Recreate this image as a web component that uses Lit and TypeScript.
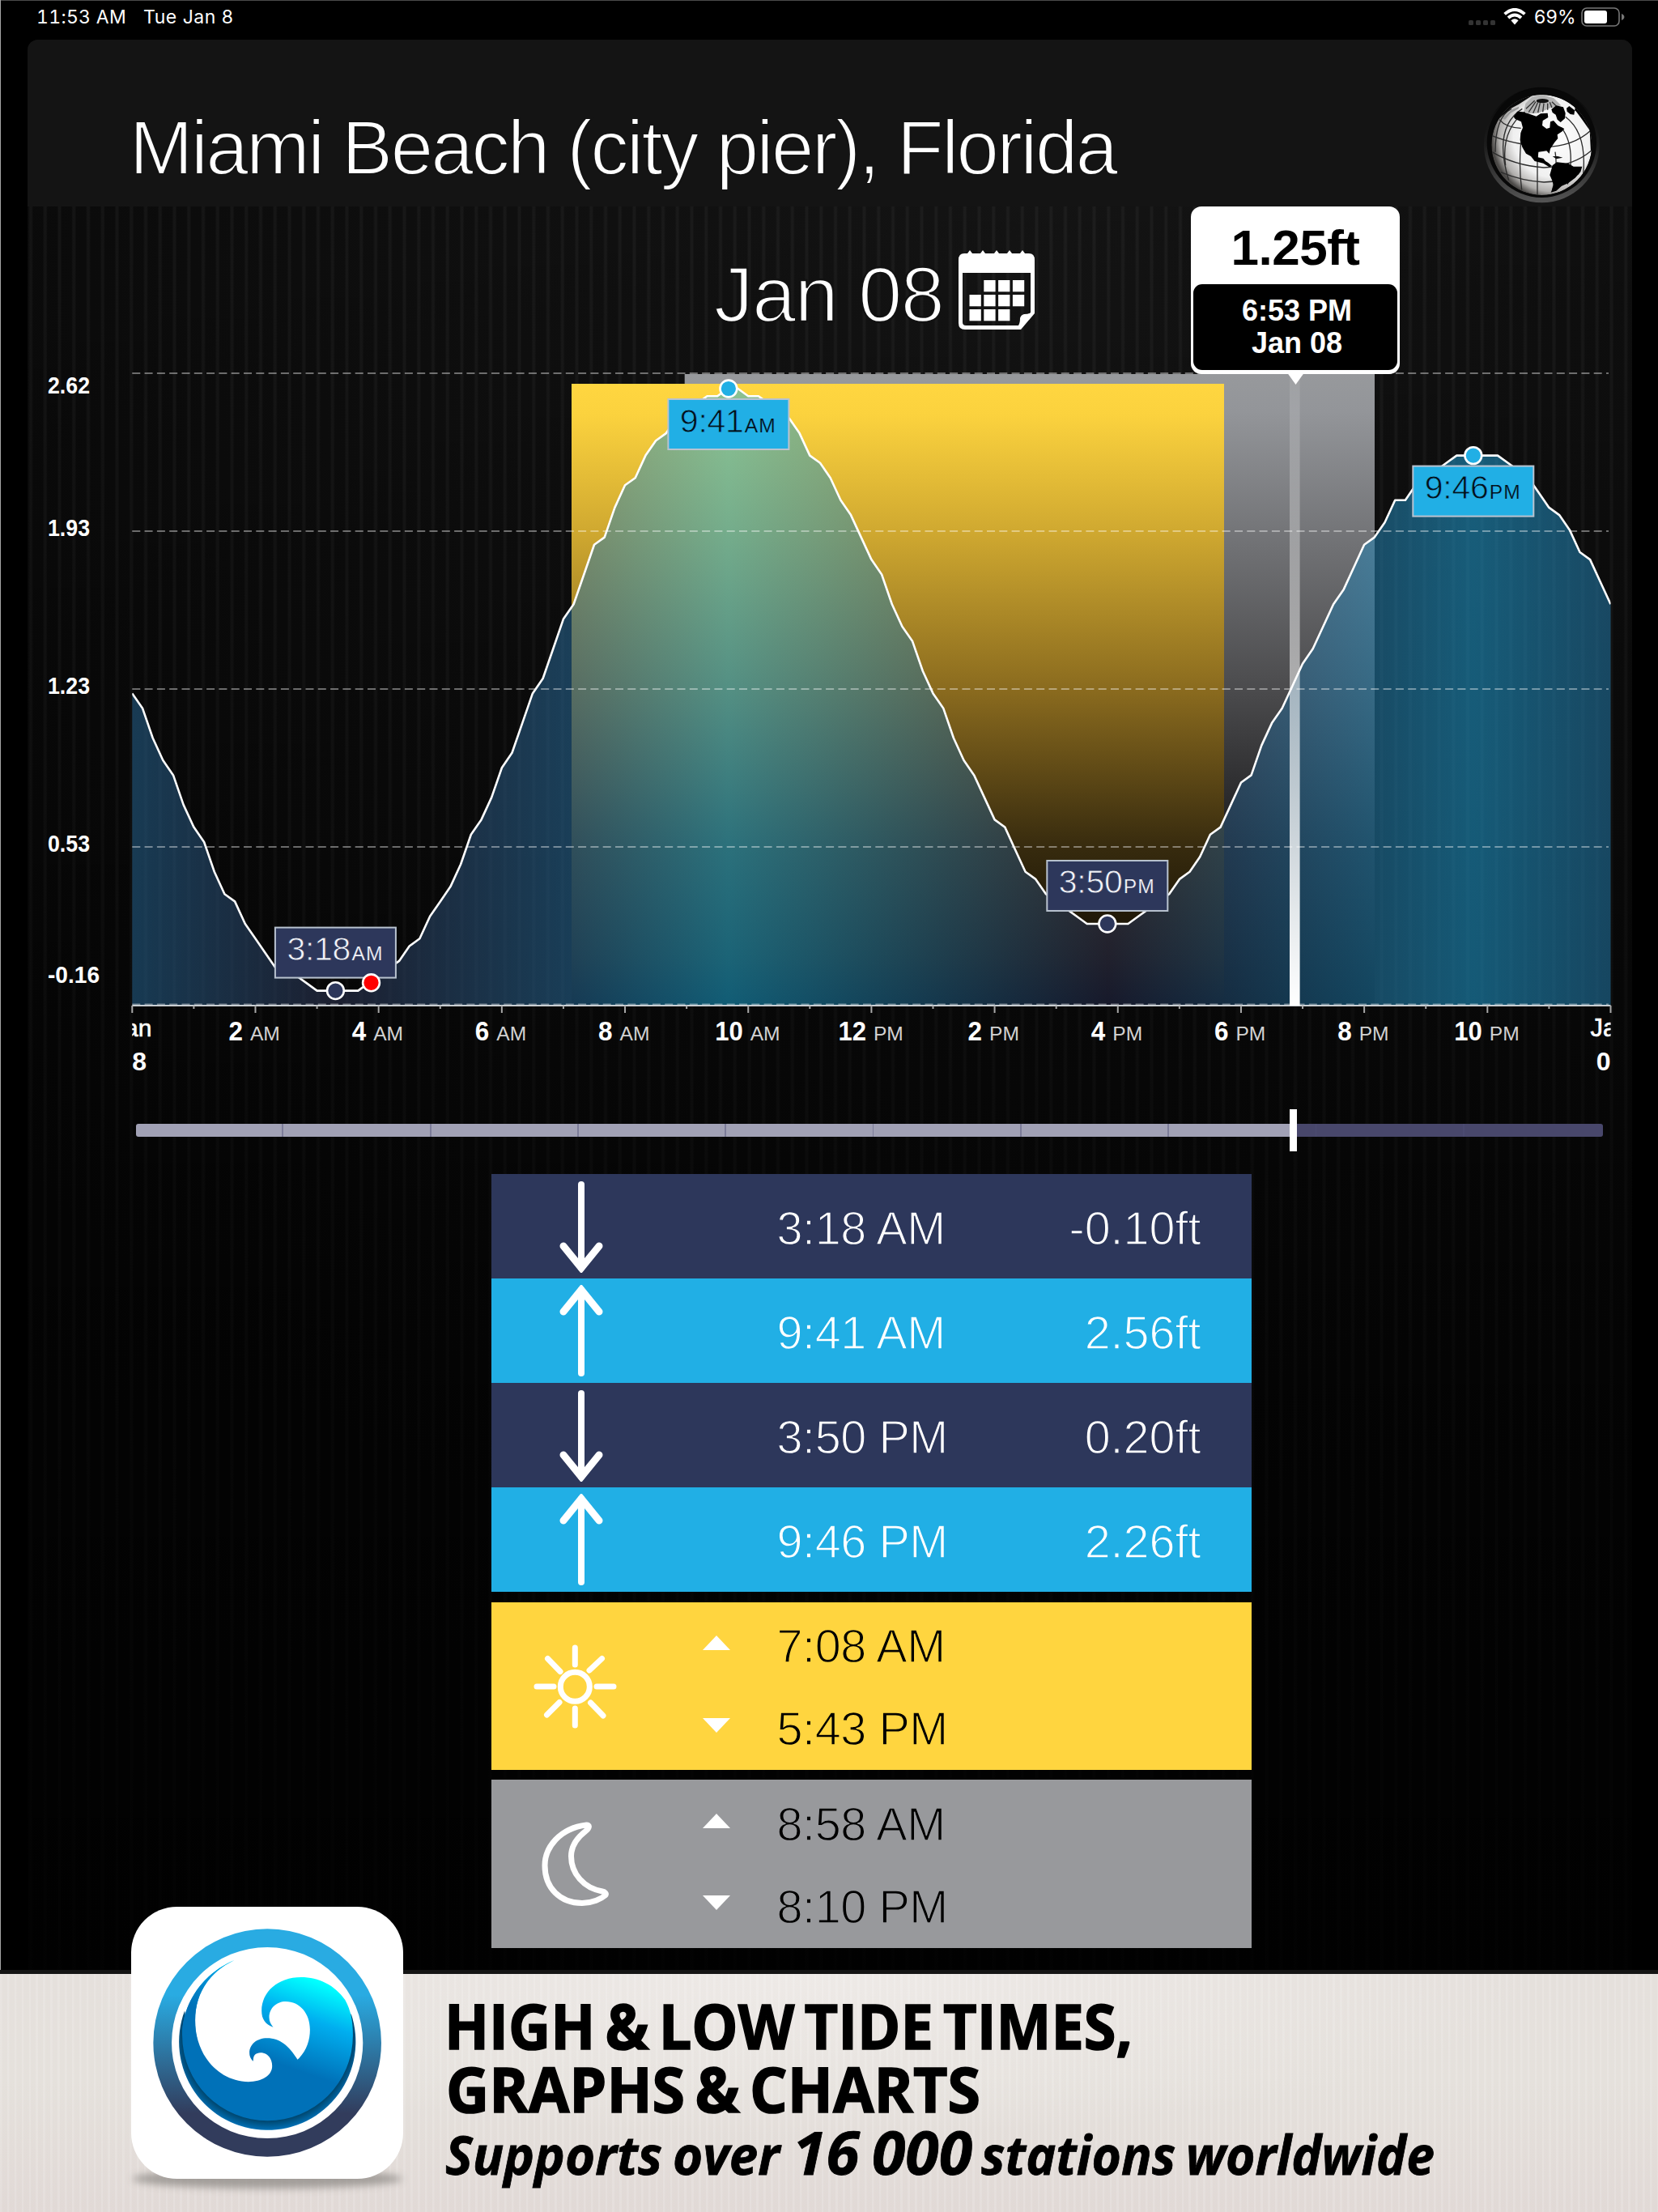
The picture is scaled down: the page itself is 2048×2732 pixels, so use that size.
import { LitElement, html, svg, css } from 'lit';
import { customElement, property } from 'lit/decorators.js';

type tideType = 'high' | 'low';

interface Marker {
  hour: number;
  cm: number;
  time: string;
  suffix: string;
  type: tideType;
}

// water level in cm, one sample every 10 minutes
const LEVELS = [
  37, 35, 31, 28, 26, 22, 19, 17, 13, 10, 9, 6, 4, 2, 0, -1, -1, -2, -3, -3, -3, -3, -3, -2,
  -1, 0, 1, 3, 4, 7, 9, 11, 14, 18, 20, 23, 27, 29, 33, 37, 39, 43, 47, 49, 53, 57, 58, 62,
  65, 66, 69, 71, 72, 74, 75, 76, 77, 77, 78, 78, 77, 77, 76, 75, 74, 72, 69, 68, 66, 63, 61, 58,
  55, 53, 49, 46, 44, 40, 37, 35, 31, 28, 26, 23, 20, 19, 16, 13, 12, 10, 9, 8, 7, 6, 6, 6,
  6, 6, 7, 8, 9, 10, 12, 13, 15, 18, 19, 22, 25, 26, 30, 33, 35, 38, 41, 43, 46, 49, 51, 54,
  57, 58, 60, 63, 63, 65, 66, 67, 68, 69, 69, 69, 69, 69, 68, 67, 66, 64, 62, 61, 59, 56, 55, 52, 49,
];

const MARKERS: Marker[] = [
  { hour: 3.3, cm: -3, time: '3:18', suffix: 'AM', type: 'low' },
  { hour: 9.68, cm: 78, time: '9:41', suffix: 'AM', type: 'high' },
  { hour: 15.83, cm: 6, time: '3:50', suffix: 'PM', type: 'low' },
  { hour: 21.77, cm: 69, time: '9:46', suffix: 'PM', type: 'high' },
];

const LEFT = 163.3;
const RIGHT = 1989.5;
const BASE = 1241;
const HOUR = (RIGHT - LEFT) / 24;

const px = (hour: number) => LEFT + hour * HOUR;
const py = (cm: number) => 480 + (78 - cm) * 9.18;

@customElement('tide-chart')
export class TideChart extends LitElement {
  static styles = css`
    :host {
      display: block;
      height: 879px;
    }

    svg {
      display: block;
      width: 1982px;
      height: 879px;
      overflow: visible;
      font-family: "Liberation Sans", Arial, sans-serif;
    }

    .bold {
      font-weight: 700;
      fill: #fff;
    }

    .grid {
      stroke: #fff;
      stroke-opacity: 0.4;
      stroke-width: 2;
      stroke-dasharray: 10 5.3;
    }

    .tick {
      stroke: #a9a9a9;
      stroke-width: 2;
    }

    .curve {
      fill: none;
      stroke: #fff;
      stroke-width: 2.6;
      stroke-linejoin: round;
    }

    .suffix {
      font-size: 24.6px;
      fill: #d2d2d2;
    }

    .box {
      stroke: #b9c3d0;
      stroke-width: 2;
    }

    .low .box,
    .low circle {
      fill: #2d375b;
    }

    .high .box,
    .high circle {
      fill: #21afe5;
    }

    .low text {
      fill: #f2f3f8;
      stroke: #2d375b;
    }

    .high text {
      fill: #04121a;
      stroke: #21afe5;
    }

    .marker circle,
    .now {
      stroke: #fff;
      stroke-width: 2.6;
    }

    .marker text {
      stroke-width: 0.8;
    }

    .marker .unit {
      stroke-width: 0.2;
    }
  `;

  private _marker(m: Marker) {
    const x = px(m.hour);
    const y = py(m.cm);
    const top = m.type === 'low' ? y - 78 : y + 13;
    return svg`
      <g class="marker ${m.type}">
        <rect class="box" x=${x - 74.5} y=${top} width="149" height="62" />
        <text x=${x - 60} y=${top + 40.5} font-size="41" textLength="79">${m.time}</text>
        <text class="unit" x=${x + 20} y=${top + 40.5} font-size="24.6" textLength="38">${m.suffix}</text>
        <circle cx=${x} cy=${y} r="10.4" />
      </g>
    `;
  }

  private _hourLabel(hour: number) {
    const x = px(hour);
    const num = hour > 12 ? hour - 12 : hour;
    const start = num > 9 ? x - 41 : x - 33;
    return svg`
      <text class="bold" x=${start} y="1284.5" font-size="33.5" textLength=${num > 9 ? 34.5 : 17.5} lengthAdjust="spacingAndGlyphs">${num}</text>
      <text class="suffix" x=${start + (num > 9 ? 43.5 : 26.5)} y="1284.5">${hour < 12 ? 'AM' : 'PM'}</text>
    `;
  }

  render() {
    const line = LEVELS.map((cm, i) => `${px(i / 6).toFixed(1)},${py(cm).toFixed(1)}`).join(' L');
    const rows: [string, number, number, number][] = [
      ['2.62', 461, 486, 52],
      ['1.93', 656, 661.5, 52],
      ['1.23', 851, 856.5, 52],
      ['0.53', 1046, 1051.5, 52],
      ['-0.16', 1240.5, 1214, 64],
    ];
    const hours = Array.from({ length: 25 }, (_, i) => i);

    return html`
      <svg viewBox="34 461 1982 879">
        <defs>
          <linearGradient id="sun" x1="0" y1="0" x2="0" y2="1">
            <stop offset="0" stop-color="#ffd640" />
            <stop offset="0.05" stop-color="#fbd23e" />
            <stop offset="0.24" stop-color="#cfa830" />
            <stop offset="0.5" stop-color="#88691e" />
            <stop offset="0.75" stop-color="#362a0e" />
            <stop offset="0.92" stop-color="#161004" />
            <stop offset="1" stop-color="#000" />
          </linearGradient>
          <linearGradient id="moon" x1="0" y1="0" x2="0" y2="1">
            <stop offset="0" stop-color="#97999c" />
            <stop offset="0.06" stop-color="#939599" />
            <stop offset="0.5" stop-color="#4b4b4d" />
            <stop offset="0.75" stop-color="#1c1c1e" />
            <stop offset="1" stop-color="#000" />
          </linearGradient>
          <linearGradient id="water" gradientUnits="userSpaceOnUse" x1=${LEFT} y1="0" x2=${RIGHT} y2="0">
            <stop offset="0" stop-color="#276998" />
            <stop offset="0.1375" stop-color="#2f3656" />
            <stop offset="0.2975" stop-color="#296fa0" />
            <stop offset="0.403" stop-color="#21b1e0" />
            <stop offset="0.66" stop-color="#2b3052" />
            <stop offset="0.907" stop-color="#21a5dc" />
            <stop offset="1" stop-color="#2480b2" />
          </linearGradient>
          <linearGradient id="needle" x1="0" y1="0" x2="0" y2="1">
            <stop offset="0" stop-color="#fff" stop-opacity="0.08" />
            <stop offset="0.85" stop-color="#fff" stop-opacity="0.88" />
            <stop offset="1" stop-color="#fff" />
          </linearGradient>
          <clipPath id="plot">
            <rect x=${LEFT} y="440" width=${RIGHT - LEFT} height="900" />
          </clipPath>
        </defs>

        <line class="grid" x1=${LEFT} x2="1987" y1="461" y2="461" />
        <rect x="845.7" y="462" width="852.3" height="779" fill="url(#moon)" />
        <rect x="706" y="474" width="806" height="767" fill="url(#sun)" />
        <path d="M${LEFT},${BASE} L${line} L${RIGHT},${BASE} Z" fill="url(#water)" fill-opacity="0.52" />
        ${rows.slice(1).map(([, y]) => svg`<line class="grid" x1=${LEFT} x2="1987" y1=${y} y2=${y} />`)}
        <g clip-path="url(#plot)"><path class="curve" d="M${line}" /></g>
        <line x1=${LEFT} x2=${RIGHT} y1="1242" y2="1242" stroke="#c9ced2" stroke-width="2" />
        ${hours.map((h) => svg`<line class="tick" x1=${px(h)} x2=${px(h)} y1="1242" y2=${h % 2 ? 1246 : 1251} />`)}

        ${rows.map(([label, , y, w]) => svg`
          <text class="bold" x="59" y=${y} font-size="29" textLength=${w} lengthAdjust="spacingAndGlyphs">${label}</text>
        `)}
        ${hours.filter((h) => h % 2 === 0 && h > 0 && h < 24).map((h) => this._hourLabel(h))}
        <g clip-path="url(#plot)" text-anchor="middle" fill="#fff">
          <text x=${LEFT} y="1280" font-size="30" stroke="#fff" stroke-width="0.6">Jan</text>
          <text class="bold" x=${LEFT} y="1322" font-size="32">08</text>
          <text x=${RIGHT} y="1280" font-size="31" stroke="#fff" stroke-width="0.6">Jan</text>
          <text class="bold" x=${RIGHT} y="1322" font-size="32">09</text>
        </g>

        ${MARKERS.map((m) => this._marker(m))}
        <circle class="now" cx="458.5" cy="1213.8" r="10.4" fill="#f00" />
        <rect x="1593" y="462" width="12.6" height="780" fill="url(#needle)" />
        <path d="M1590.5 461 h20 l-10 14 z" fill="#fff" />
      </svg>
    `;
  }
}

@customElement('tide-row')
export class TideRow extends LitElement {
  static styles = css`
    :host {
      display: block;
      font-family: "Liberation Sans", Arial, sans-serif;
      font-size: 57.5px;
      letter-spacing: -0.4px;
    }

    .row {
      display: flex;
      height: 129.1px;
      box-sizing: border-box;
      padding: 0 62px 0 84px;
      align-items: center;
      color: #fff;
    }

    .low {
      background: #2d375b;
      -webkit-text-stroke: 1.4px #2d375b;
    }

    .high {
      background: #21afe5;
      -webkit-text-stroke: 1.4px #21afe5;
    }

    .time {
      flex: 1;
      margin-left: 215px;
      padding-top: 4px;
    }

    .value {
      padding-top: 4px;
      letter-spacing: 0;
    }

    .arrow {
      width: 54px;
      height: 114px;
      fill: none;
      stroke: #fff;
      stroke-linecap: round;
      stroke-width: 8;
    }

    .low .arrow {
      transform: rotate(180deg);
    }
  `;

  @property({ type: String })
  type: tideType = 'high';

  @property({ type: String })
  time = '';

  @property({ type: String })
  value = '';

  render() {
    return html`
      <div class="row ${this.type}">
        <svg class="arrow" viewBox="0 0 54 114">
          <path d="M27 6 V109" />
          <path d="M5 33 L27 6 L49 33" stroke-width="9" />
        </svg>
        <span class="time">${this.time}</span>
        <span class="value">${this.value}</span>
      </div>
    `;
  }
}

@customElement('rise-set')
export class RiseSet extends LitElement {
  static styles = css`
    :host {
      display: block;
      font-family: "Liberation Sans", Arial, sans-serif;
      font-size: 57.5px;
      letter-spacing: -0.4px;
    }

    .card {
      display: flex;
      height: 207.5px;
    }

    .sun {
      background: #ffd53f;
      color: #000;
      -webkit-text-stroke: 1.4px #ffd53f;
    }

    .moon {
      background: #98999c;
      color: #000;
      -webkit-text-stroke: 1.4px #98999c;
    }

    .icon {
      width: 206px;
      height: 207px;
      fill: none;
      stroke: #fff;
      stroke-width: 7;
      stroke-linecap: round;
      stroke-linejoin: round;
    }

    .times {
      display: flex;
      flex-direction: column;
      padding: 4px 0 0 55px;
    }

    .line {
      display: flex;
      align-items: center;
      gap: 58px;
      height: 103.2px;
    }

    .tri {
      width: 34px;
      height: 18px;
      fill: #fff;
      margin-top: -9px;
    }
  `;

  @property({ type: String })
  type: 'sun' | 'moon' = 'sun';

  @property({ type: String })
  rise = '';

  @property({ type: String })
  set = '';

  render() {
    return html`
      <div class="card ${this.type}">
        <svg class="icon" viewBox="0 0 206 207">
          ${this.type === 'sun'
            ? svg`
              <circle cx="103.3" cy="104.2" r="18" />
              <path d="M103.3 56 V77 M103.3 131 V152 M56 104 H77 M130 104 H151 M69.5 69.5 L85 85.5
                M136.5 69.5 L121 84 M68.5 139 L84 123.5 M138 140 L122.5 124" />
            `
            : svg`
              <path d="M117.5 56 C84 60 66 84 66 106 C66 134 85 152.5 112 152.5 C125 152.5 136 147 140.5 143
                C143 141 140 138.5 137 138 C114 134 98.5 116 98.5 94.5 C98.5 82 105.5 72 116.5 63.5 C121.5 59 121.5 56 117.5 56 Z" />
            `}
        </svg>
        <div class="times">
          <div class="line">
            <svg class="tri" viewBox="0 0 34 18"><path d="M0 18 L17 0 L34 18 Z" /></svg>
            <span>${this.rise}</span>
          </div>
          <div class="line">
            <svg class="tri" viewBox="0 0 34 18"><path d="M0 0 L17 18 L34 0 Z" /></svg>
            <span>${this.set}</span>
          </div>
        </div>
      </div>
    `;
  }
}

@customElement('app-root')
export class AppRoot extends LitElement {
  static styles = css`
    :host {
      display: flex;
      flex-direction: column;
      width: 2048px;
      height: 2732px;
      overflow: hidden;
      position: relative;
      background: #000;
      font-family: "Liberation Sans", Arial, sans-serif;
      color: #fff;
    }

    .status {
      display: flex;
      align-items: center;
      height: 49px;
      box-sizing: border-box;
      border-top: 1px solid #4a4a4a;
      padding: 0 46px 9px 45px;
      font-family: Inter, sans-serif;
      font-size: 23px;
      letter-spacing: 0.3px;
    }

    .clock {
      font-variant-numeric: tabular-nums;
    }

    .date {
      flex: 1;
      margin-left: 21px;
      letter-spacing: 0.5px;
    }

    .status svg {
      display: block;
    }

    .wifi {
      margin: 0 10px 0 9px;
    }

    .battery {
      margin-left: 6px;
      margin-right: -5px;
    }

    .screen {
      display: flex;
      flex-direction: column;
      flex: 1;
      margin: 0 32px 0 34px;
      border-radius: 13px 13px 0 0;
      background:
        linear-gradient(180deg, transparent 0, rgba(0, 0, 0, 0.3) 900px, rgba(0, 0, 0, 0.75) 2000px, rgba(0, 0, 0, 0.88) 2400px),
        repeating-linear-gradient(90deg, transparent 0 1px, rgba(255, 255, 255, 0.042) 3px 5px, transparent 7px 17.75px),
        radial-gradient(1700px 1700px at 1250px 250px, #151515, #080808);
    }

    .header {
      display: flex;
      justify-content: space-between;
      align-items: center;
      height: 206px;
      box-sizing: border-box;
      padding: 0 38px 0 126px;
      background: #141414;
      border-radius: 13px 13px 0 0;
    }

    .header h1 {
      margin: 61px 0 0;
      font-size: 94px;
      font-weight: 400;
      letter-spacing: -2.4px;
      line-height: 1;
      white-space: nowrap;
      -webkit-text-stroke: 2px #141414;
    }

    .globe {
      width: 147px;
      height: 147px;
      margin-top: 53px;
    }

    .day {
      display: flex;
      align-items: center;
      height: 206px;
      padding-left: 848px;
      font-size: 97px;
      letter-spacing: -1.3px;
      -webkit-text-stroke: 2.4px #121212;
    }

    .day span {
      padding-top: 12px;
    }

    .day svg {
      margin: 2px 0 0 18px;
    }

    .slider {
      display: flex;
      align-items: center;
      width: 1812px;
      height: 110px;
      box-sizing: border-box;
      padding-top: 2px;
      margin-left: 134px;
      position: relative;
    }

    .track {
      flex: 1;
      height: 16px;
      border-radius: 3px;
      background:
        repeating-linear-gradient(90deg, transparent 0 180.5px, rgba(80, 80, 120, 0.45) 180.5px 182.3px),
        linear-gradient(90deg, #a1a1b5 1429px, #48476b 1429px);
    }

    .handle {
      position: absolute;
      left: 1425px;
      top: 30px;
      width: 9px;
      height: 52px;
      background: #fff;
    }

    .table {
      display: flex;
      flex-direction: column;
      width: 939px;
      margin-left: 572.5px;
    }

    rise-set {
      margin-top: 12.2px;
    }

    .tooltip {
      position: absolute;
      left: 1471px;
      top: 255px;
      width: 258px;
      height: 207px;
      box-sizing: border-box;
      padding: 0 3px 5px;
      display: flex;
      flex-direction: column;
      border-radius: 13px;
      background: #fff;
      color: #000;
      font-weight: 700;
      text-align: center;
    }

    .height {
      height: 96px;
      line-height: 102px;
      font-size: 62px;
      letter-spacing: -0.5px;
    }

    .when {
      flex: 1;
      padding: 13px 0 0 4px;
      border-radius: 11px;
      background: #000;
      color: #fff;
      font-size: 36px;
      line-height: 40px;
    }

    .banner {
      position: absolute;
      left: 0;
      right: 0;
      bottom: 0;
      height: 299px;
      box-sizing: border-box;
      border-top: 5px solid #141414;
      display: flex;
      gap: 52px;
      padding-left: 162px;
      background:
        repeating-linear-gradient(90deg, rgba(255, 255, 255, 0.14) 0 2px, transparent 3px 8.9px),
        radial-gradient(900px 200px at 1000px 0, #eeeae7, transparent),
        linear-gradient(180deg, #e5e0dc, #e5e1dc 45%, #e1d9d6);
    }

    .appicon {
      width: 336px;
      height: 336px;
      margin-top: -83px;
      overflow: visible;
    }

    .tagline {
      width: 1300px;
      height: 294px;
      font-family: "Open Sans", sans-serif;
      font-weight: 700;
      word-spacing: -7px;
      fill: #000;
      stroke: #000;
      stroke-width: 1.6;
    }

    .tagline .sub {
      font-style: italic;
      word-spacing: -4px;
      stroke-width: 0.8;
    }

    .edge {
      position: absolute;
      left: 0;
      top: 0;
      width: 1px;
      height: 2433px;
      background: #a5a5a5;
    }
  `;

  private _globe() {
    return html`
      <svg class="globe" viewBox="92 312 441 441">
        <defs>
          <radialGradient id="ball" cx="0.62" cy="0.42" r="0.62">
            <stop offset="0" stop-color="#fff" />
            <stop offset="0.65" stop-color="#f0f0f0" />
            <stop offset="0.88" stop-color="#b0aeac" />
            <stop offset="1" stop-color="#4a4846" />
          </radialGradient>
          <linearGradient id="rim" x1="0" y1="0" x2="0" y2="1">
            <stop offset="0" stop-color="#070707" />
            <stop offset="0.5" stop-color="#1c1c1c" />
            <stop offset="1" stop-color="#555" />
          </linearGradient>
          <clipPath id="disc"><circle cx="312" cy="534" r="186" /></clipPath>
        </defs>
        <circle cx="312" cy="534" r="214" fill="url(#rim)" />
        <circle cx="312" cy="526" r="203" fill="#080808" />
        <g clip-path="url(#disc)">
          <circle cx="312" cy="534" r="186" fill="url(#ball)" />
          <g fill="none" stroke="#2c2c2c" stroke-width="4">
            <path d="M155 440 Q180 470 235 472 M128 500 Q200 530 320 542 Q430 540 494 480 M128 560 Q210 610 320 618
              Q430 612 496 555 M160 635 Q240 668 320 672 Q400 670 450 640" />
            <path d="M240 400 Q130 470 190 665 M250 410 Q160 480 178 610 M240 480 Q224 600 238 700 M296 570 V722
              M362 560 Q372 620 352 700 M385 470 Q440 540 408 680 M400 430 Q480 490 466 640 M200 400 Q140 430 140 560" />
          </g>
          <path d="M150 440 L196 400 L226 384 L276 352 L250 330 L200 340 L140 400 Z" fill="#0a0a0a" />
          <path d="M166 436 L200 404 L228 392 L226 400 L196 416 L176 440 Z" fill="#9a9a9a" />
          <path d="M246 408 L252 380 L276 356 L312 348 L356 360 L384 388 L340 398 L300 416 L262 418 Z" fill="#b4b4b4" />
          <path d="M264 412 L290 374 M280 416 L298 376 M298 414 L306 378 M254 400 L286 370 M316 412 L320 380 M334 404 L334 380
            M350 396 L342 376 M366 390 L350 374" stroke="#333" stroke-width="4" />
          <ellipse cx="315" cy="371" rx="23" ry="8" fill="#111" />
          <path d="M208 430 L222 410 L242 412 L262 418 L292 428 L308 418 L334 416 L336 432 L316 444 L314 462
            L330 474 L342 470 L344 448 L356 444 L372 462 L396 474 L388 484 L370 496 L372 510 L360 524 L344 548
            L340 566 L330 556 L300 560 L298 580 L318 584 L326 594 L336 600 L350 612 L340 616 L318 602 L286 594
            L272 576 L254 566 L240 542 L232 516 L234 490 L242 470 L236 448 L214 438 Z" fill="#000" />
          <path d="M348 402 L366 388 L392 394 L400 416 L398 436 L382 450 L370 440 L364 422 L352 414 Z" fill="#000" />
          <path d="M404 398 L414 390 L440 410 L462 440 L490 480 L494 560 L520 500 L480 400 L420 350 L370 350 L420 372 L436 396
            L432 422 L418 420 L406 410 Z" fill="#000" />
          <path d="M352 576 L372 576 L390 581 L366 586 Z" fill="#111" />
          <path d="M352 610 L368 598 L410 602 L430 614 L462 614 L456 634 L436 656 L410 676 L386 686 L366 704 L346 710
            L356 684 L350 664 L342 646 Z" fill="#000" />
        </g>
      </svg>
    `;
  }

  private _calendar() {
    const cells = [
      [1, 0], [2, 0], [3, 0],
      [0, 1], [1, 1], [2, 1], [3, 1],
      [0, 2], [1, 2], [2, 2],
    ];
    return html`
      <svg width="96" height="100" viewBox="0 0 96 100" fill="#fff">
        <path d="M1 12 Q1 4 8 4 L12 4 L15 0 L18 4 L28 4 L31 0 L34 4 L45 4 L48 0 L51 4 L61 4 L64 0 L67 4 L77 4 L80 0 L83 4
          L88 4 Q95 4 95 12 V78 L78 98 H9 Q1 98 1 90 Z M6 28 V89 Q6 93 10 93 H75 Q77 90 77 84 Q78 80 82 79 Q88 79 90 77
          V28 Z" fill-rule="evenodd" />
        ${cells.map(([c, r]) => svg`<rect x=${14.5 + c * 17.8} y=${37 + r * 18} width="14.3" height="14.3" />`)}
      </svg>
    `;
  }

  private _appIcon() {
    return html`
      <svg class="appicon" viewBox="66 45 1007 1007">
        <defs>
          <linearGradient id="ring" x1="0" y1="0" x2="0" y2="1">
            <stop offset="0.29" stop-color="#29abe2" />
            <stop offset="0.81" stop-color="#323c5c" />
          </linearGradient>
          <linearGradient id="wave" gradientUnits="userSpaceOnUse" x1="800" y1="300" x2="680" y2="650">
            <stop offset="0.1" stop-color="#00ffff" />
            <stop offset="0.48" stop-color="#00aeef" />
            <stop offset="1" stop-color="#0071b8" />
          </linearGradient>
          <linearGradient id="tail" gradientUnits="userSpaceOnUse" x1="440" y1="240" x2="300" y2="420">
            <stop offset="0" stop-color="#00aeef" />
            <stop offset="1" stop-color="#0071b8" />
          </linearGradient>
          <radialGradient id="shade" gradientUnits="userSpaceOnUse" cx="571" cy="521" r="357">
            <stop offset="0.885" stop-color="#00466e" />
            <stop offset="0.985" stop-color="#0071b8" />
          </radialGradient>
          <clipPath id="lefthalf"><rect x="200" y="200" width="300" height="330" /></clipPath>
          <filter id="soft" x="-20%" y="-100%" width="140%" height="300%">
            <feGaussianBlur stdDeviation="14" />
          </filter>
        </defs>
        <ellipse cx="570" cy="1052" rx="500" ry="36" fill="#8d8985" opacity="0.75" filter="url(#soft)" />
        <rect x="66" y="45" width="1007" height="1007" rx="170" fill="#fff" />
        <path d="M148 548.5 a422 422 0 1 1 844 0 a422 422 0 1 1 -844 0 Z M216 548.5 a354 354 0 1 0 708 0 a354 354 0 1 0 -708 0 Z"
          fill="url(#ring)" />
        <path d="M264 430 A327 327 0 1 0 880 440 L860 560 L560 800 L290 600 Z" fill="url(#shade)" />
        <path d="M448 243 C335 290 255 400 255 521 A316 316 0 0 0 887 521 C887 470 880 430 858 390
          C820 335 760 306 695 306 C610 306 549 360 549 430 C549 460 562 480 592 491 C583 480 577 470 577 455
          C577 420 605 396 638 396 C690 396 728 440 728 500 C728 540 715 580 682 611 C655 565 620 531 569 531
          C530 531 504 555 504 585 C504 600 510 610 518 617 C517 600 522 586 545 585 C570 585 588 605 588 635
          C588 670 550 693 500 693 C385 690 303 590 303 465 C303 370 350 290 448 243 Z" fill="url(#wave)" />
        <path d="M448 243 C335 290 255 400 255 521 L310 531 C304 510 303 490 303 465 C303 370 350 290 448 243 Z"
          fill="url(#tail)" clip-path="url(#lefthalf)" />
      </svg>
    `;
  }

  render() {
    return html`
      <div class="status">
        <span class="clock">11:53 AM</span>
        <span class="date">Tue Jan 8</span>
        <svg width="34" height="20" fill="#333">
          <rect x="0" y="14" width="6" height="6" rx="1.5" />
          <rect x="9" y="14" width="6" height="6" rx="1.5" />
          <rect x="18" y="14" width="6" height="6" rx="1.5" />
          <rect x="27" y="14" width="6" height="6" rx="1.5" />
        </svg>
        <svg class="wifi" width="28" height="21" viewBox="0 0 28 21" fill="none" stroke="#fff" stroke-width="3.9">
          <path d="M1.6 7.4 Q14 -3.6 26.4 7.4" />
          <path d="M6 12 Q14 5 22 12" />
          <path d="M9.4 15.2 Q14 11.4 18.6 15.2 L14 20.4 Z" fill="#fff" stroke="none" />
        </svg>
        <span>69%</span>
        <svg class="battery" width="54" height="24" viewBox="0 0 54 24">
          <rect x="1" y="1" width="46" height="22" rx="6" fill="none" stroke="#777" stroke-width="1.6" />
          <rect x="4" y="4" width="28" height="16" rx="3" fill="#fff" />
          <path d="M50 8 Q53.4 9.5 53.4 12 Q53.4 14.5 50 16 Z" fill="#777" />
        </svg>
      </div>

      <div class="screen">
        <div class="header">
          <h1>Miami Beach (city pier), Florida</h1>
          ${this._globe()}
        </div>
        <div class="day">
          <span>Jan 08</span>
          ${this._calendar()}
        </div>
        <tide-chart></tide-chart>
        <div class="slider">
          <div class="track"></div>
          <div class="handle"></div>
        </div>
        <div class="table">
          <tide-row type="low" time="3:18 AM" value="-0.10ft"></tide-row>
          <tide-row type="high" time="9:41 AM" value="2.56ft"></tide-row>
          <tide-row type="low" time="3:50 PM" value="0.20ft"></tide-row>
          <tide-row type="high" time="9:46 PM" value="2.26ft"></tide-row>
          <rise-set type="sun" rise="7:08 AM" set="5:43 PM"></rise-set>
          <rise-set type="moon" rise="8:58 AM" set="8:10 PM"></rise-set>
        </div>
      </div>

      <div class="tooltip">
        <div class="height">1.25ft</div>
        <div class="when">6:53 PM<br />Jan 08</div>
      </div>

      <div class="banner">
        ${this._appIcon()}
        <svg class="tagline" viewBox="550 2438 1300 294">
          <text x="549" y="2530.5" font-size="77" textLength="850" lengthAdjust="spacingAndGlyphs">HIGH &amp; LOW TIDE TIMES,</text>
          <text x="551" y="2609" font-size="77" textLength="660" lengthAdjust="spacingAndGlyphs">GRAPHS &amp; CHARTS</text>
          <text class="sub" x="550" y="2686" font-size="67" textLength="413" lengthAdjust="spacingAndGlyphs">Supports over</text>
          <text class="sub" x="979" y="2686" font-size="73" textLength="222" lengthAdjust="spacingAndGlyphs">16 000</text>
          <text class="sub" x="1212" y="2686" font-size="67" textLength="560" lengthAdjust="spacingAndGlyphs">stations worldwide</text>
        </svg>
      </div>
      <div class="edge"></div>
    `;
  }
}
